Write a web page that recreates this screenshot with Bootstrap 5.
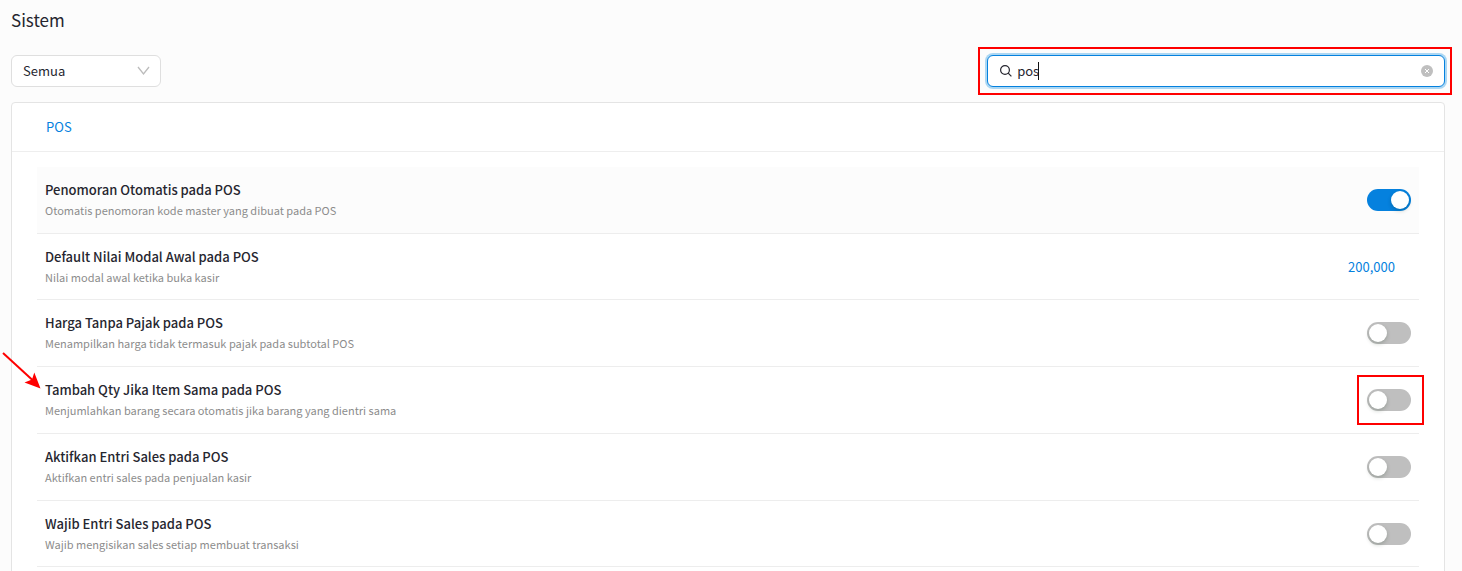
<!DOCTYPE html>
<html lang="id">
<head>
<meta charset="utf-8">
<meta name="viewport" content="width=device-width, initial-scale=1">
<title>Sistem</title>
<link href="https://cdn.jsdelivr.net/npm/bootstrap@5.3.0/dist/css/bootstrap.min.css" rel="stylesheet">
<style>
  :root { --accent: #0581de; --ink: #26262f; --line: #e4e4e4; --note: #fe0000; }
  body { background: #fcfcfc; color: var(--ink); font: 13px/20px "Noto Sans CJK SC", sans-serif; overflow: hidden; }
  .page { padding: 7px 17px 0 11px; }
  .page-title { font-size: 17px; line-height: 26px; font-weight: 400; margin-bottom: 22px; }
  .filter-box { width: 150px; }
  .filter-box select, .search-box input { height: 32px; border-radius: 6px; font-size: 13px; line-height: 20px; color: var(--ink); background: #fff; }
  .filter-box select { appearance: none; border: 1px solid #dfdfdf; padding: 0 28px 0 11px; }
  .filter-box svg { right: 11px; top: 11px; }
  .search-box { width: calc(32% - 1px); }
  .search-box input { border: 1px solid var(--accent); box-shadow: 0 0 0 2px #acd7f3; padding: 0 40px 2px 29px; outline: 0; }
  .search-icon { left: 12px; top: 9px; }
  .clear-btn { right: 12px; top: 10px; width: 12px; height: 12px; line-height: 0; }
  .caret { left: 51px; top: 7px; width: 1px; height: 18px; background: #111; }
  .note-box::after { content: ""; position: absolute; border: 2px solid var(--note); pointer-events: none; }
  .search-box.note-box::after { inset: -8px -7px -8px -9px; }
  .switch-box.note-box::after { inset: -14px -13px -14px -10px; }
  .panel { background: #fff; border: 1px solid var(--line); border-radius: 4px; margin-top: 15px; }
  .panel-head { padding: 14px 34px; border-bottom: 1px solid #eee; font-weight: 400; font-size: 13px; line-height: 20px; color: var(--accent); }
  .panel-body { padding: 15px 25px; }
  .setting { padding: 13px 8px 13px; border-bottom: 1px solid #ededed; }
  .setting.hovered { background: #fcfcfc; }
  .setting.amount, .setting:last-child { padding-bottom: 12px; }
  .setting label { display: block; font-weight: 500; line-height: 20px; }
  .setting p { font-size: 11px; line-height: 20px; color: #8c8c8c; margin: 0; }
  .setting.amount a { color: var(--accent); padding-right: 16px; }
  .toggle { appearance: none; display: block; width: 44px; height: 22px; margin: 0; border-radius: 11px; background: #bfbfbf; cursor: pointer; position: relative; }
  .toggle::before { content: ""; display: block; width: 18px; height: 18px; margin: 2px; border-radius: 50%; background: #fff; box-shadow: 0 2px 4px rgba(0,35,11,.2); }
  .toggle:checked { background: var(--accent); }
  .toggle:checked::before { margin-left: 24px; }
  .arrow { left: -36px; top: -16px; pointer-events: none; }
</style>
</head>
<body>
<main class="page">
  <h1 class="page-title">Sistem</h1>
  <div class="d-flex justify-content-between">
    <div class="filter-box position-relative">
      <select class="w-100" aria-label="Kategori"><option>Semua</option></select>
      <svg class="position-absolute pe-none" width="13" height="10" viewBox="0 0 13 10" fill="none" stroke="#bcbcbc" stroke-width="1.300"><path d="M1 1l5.500 7L12 1"/></svg>
    </div>
    <div class="search-box note-box position-relative">
      <svg class="search-icon position-absolute" width="14" height="14" viewBox="0 0 14 14" fill="none" stroke="#26262f" stroke-width="1.200"><circle cx="6" cy="6" r="4.400"/><path d="M9.200 9.200l3.200 3.200"/></svg>
      <input class="w-100" type="text" value="pos" aria-label="Cari">
      <span class="caret position-absolute"></span>
      <button class="clear-btn btn p-0 border-0 position-absolute" type="button" aria-label="Hapus">
        <svg width="12" height="12" viewBox="0 0 12 12"><circle cx="6" cy="6" r="6" fill="#bfbfbf"/><path d="M4 4l4 4M8 4L4 8" stroke="#fff" stroke-width="1"/></svg>
      </button>
    </div>
  </div>

  <section class="panel">
    <h2 class="panel-head mb-0">POS</h2>
    <div class="panel-body">
      <div class="setting hovered d-flex justify-content-between align-items-center">
        <div><label for="s1">Penomoran Otomatis pada POS</label><p>Otomatis penomoran kode master yang dibuat pada POS</p></div>
        <div class="switch-box position-relative"><input class="toggle" type="checkbox" role="switch" id="s1" checked></div>
      </div>
      <div class="setting amount d-flex justify-content-between align-items-center">
        <div><label for="s2">Default Nilai Modal Awal pada POS</label><p>Nilai modal awal ketika buka kasir</p></div>
        <a class="text-decoration-none" href="#" id="s2">200,000</a>
      </div>
      <div class="setting d-flex justify-content-between align-items-center">
        <div><label for="s3">Harga Tanpa Pajak pada POS</label><p>Menampilkan harga tidak termasuk pajak pada subtotal POS</p></div>
        <div class="switch-box position-relative"><input class="toggle" type="checkbox" role="switch" id="s3"></div>
      </div>
      <div class="setting d-flex justify-content-between align-items-center position-relative">
        <svg class="arrow position-absolute" width="42" height="42" viewBox="0 0 42 42"><path d="M2 2L32 29.500" stroke="#fe0000" stroke-width="2"/><path d="M39.500 37.500L33.300 21.500L31 28.500L23.500 31.500Z" fill="#fe0000"/></svg>
        <div><label for="s4">Tambah Qty Jika Item Sama pada POS</label><p>Menjumlahkan barang secara otomatis jika barang yang dientri sama</p></div>
        <div class="switch-box note-box position-relative"><input class="toggle" type="checkbox" role="switch" id="s4"></div>
      </div>
      <div class="setting d-flex justify-content-between align-items-center">
        <div><label for="s5">Aktifkan Entri Sales pada POS</label><p>Aktifkan entri sales pada penjualan kasir</p></div>
        <div class="switch-box position-relative"><input class="toggle" type="checkbox" role="switch" id="s5"></div>
      </div>
      <div class="setting d-flex justify-content-between align-items-center">
        <div><label for="s6">Wajib Entri Sales pada POS</label><p>Wajib mengisikan sales setiap membuat transaksi</p></div>
        <div class="switch-box position-relative"><input class="toggle" type="checkbox" role="switch" id="s6"></div>
      </div>
    </div>
  </section>
</main>
<script src="https://cdn.jsdelivr.net/npm/bootstrap@5.3.0/dist/js/bootstrap.bundle.min.js"></script>
</body>
</html>
